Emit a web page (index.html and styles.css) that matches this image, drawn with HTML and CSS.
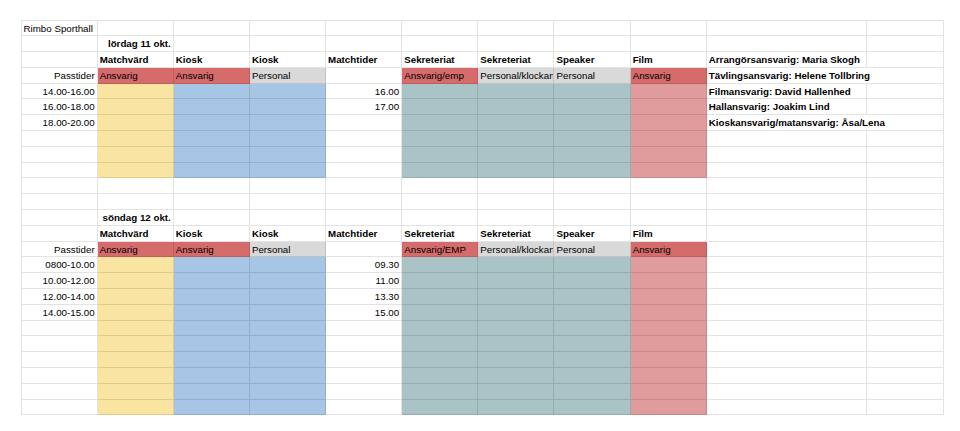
FILE: index.html
```html
<!DOCTYPE html>
<html lang="sv">
<head>
<meta charset="utf-8">
<title>Rimbo Sporthall</title>
<link rel="stylesheet" href="styles.css">
</head>
<body>
<div class="sheet">
  <!-- R1 -->
  <div class="c">Rimbo Sporthall</div><div class="c"></div><div class="c"></div><div class="c"></div><div class="c"></div><div class="c"></div><div class="c"></div><div class="c"></div><div class="c"></div><div class="c"></div><div class="c"></div>
  <!-- R2 -->
  <div class="c"></div><div class="c b r">lördag 11 okt.</div><div class="c"></div><div class="c"></div><div class="c"></div><div class="c"></div><div class="c"></div><div class="c"></div><div class="c"></div><div class="c"></div><div class="c"></div>
  <!-- R3 -->
  <div class="c"></div><div class="c b">Matchvärd</div><div class="c b">Kiosk</div><div class="c b">Kiosk</div><div class="c b">Matchtider</div><div class="c b">Sekreteriat</div><div class="c b">Sekreteriat</div><div class="c b">Speaker</div><div class="c b">Film</div><div class="c b">Arrangörsansvarig: Maria Skogh</div><div class="c"></div>
  <!-- R4 -->
  <div class="c r">Passtider</div><div class="c red">Ansvarig</div><div class="c red">Ansvarig</div><div class="c gray">Personal</div><div class="c"></div><div class="c red">Ansvarig/emp</div><div class="c gray">Personal/klockan</div><div class="c gray">Personal</div><div class="c red">Ansvarig</div><div class="c b span2">Tävlingsansvarig: Helene Tollbring</div>
  <!-- R5 -->
  <div class="c r">14.00-16.00</div><div class="c yel"></div><div class="c blu"></div><div class="c blu"></div><div class="c r">16.00</div><div class="c teal"></div><div class="c teal"></div><div class="c teal"></div><div class="c pink"></div><div class="c b">Filmansvarig: David Hallenhed</div><div class="c"></div>
  <!-- R6 -->
  <div class="c r">16.00-18.00</div><div class="c yel"></div><div class="c blu"></div><div class="c blu"></div><div class="c r">17.00</div><div class="c teal"></div><div class="c teal"></div><div class="c teal"></div><div class="c pink"></div><div class="c b">Hallansvarig: Joakim Lind</div><div class="c"></div>
  <!-- R7 -->
  <div class="c r">18.00-20.00</div><div class="c yel"></div><div class="c blu"></div><div class="c blu"></div><div class="c"></div><div class="c teal"></div><div class="c teal"></div><div class="c teal"></div><div class="c pink"></div><div class="c b span2">Kioskansvarig/matansvarig: Åsa/Lena</div>
  <!-- R8 -->
  <div class="c"></div><div class="c yel"></div><div class="c blu"></div><div class="c blu"></div><div class="c"></div><div class="c teal"></div><div class="c teal"></div><div class="c teal"></div><div class="c pink"></div><div class="c"></div><div class="c"></div>
  <!-- R9 -->
  <div class="c"></div><div class="c yel"></div><div class="c blu"></div><div class="c blu"></div><div class="c"></div><div class="c teal"></div><div class="c teal"></div><div class="c teal"></div><div class="c pink"></div><div class="c"></div><div class="c"></div>
  <!-- R10 -->
  <div class="c"></div><div class="c yel"></div><div class="c blu"></div><div class="c blu"></div><div class="c"></div><div class="c teal"></div><div class="c teal"></div><div class="c teal"></div><div class="c pink"></div><div class="c"></div><div class="c"></div>
  <!-- R11 -->
  <div class="c"></div><div class="c"></div><div class="c"></div><div class="c"></div><div class="c"></div><div class="c"></div><div class="c"></div><div class="c"></div><div class="c"></div><div class="c"></div><div class="c"></div>
  <!-- R12 -->
  <div class="c"></div><div class="c"></div><div class="c"></div><div class="c"></div><div class="c"></div><div class="c"></div><div class="c"></div><div class="c"></div><div class="c"></div><div class="c"></div><div class="c"></div>
  <!-- R13 -->
  <div class="c"></div><div class="c b r">söndag 12 okt.</div><div class="c"></div><div class="c"></div><div class="c"></div><div class="c"></div><div class="c"></div><div class="c"></div><div class="c"></div><div class="c"></div><div class="c"></div>
  <!-- R14 -->
  <div class="c"></div><div class="c b">Matchvärd</div><div class="c b">Kiosk</div><div class="c b">Kiosk</div><div class="c b">Matchtider</div><div class="c b">Sekreteriat</div><div class="c b">Sekreteriat</div><div class="c b">Speaker</div><div class="c b">Film</div><div class="c"></div><div class="c"></div>
  <!-- R15 -->
  <div class="c r">Passtider</div><div class="c red">Ansvarig</div><div class="c red">Ansvarig</div><div class="c gray">Personal</div><div class="c"></div><div class="c red">Ansvarig/EMP</div><div class="c gray">Personal/klockan</div><div class="c gray">Personal</div><div class="c red">Ansvarig</div><div class="c"></div><div class="c"></div>
  <!-- R16 -->
  <div class="c r">0800-10.00</div><div class="c yel"></div><div class="c blu"></div><div class="c blu"></div><div class="c r">09.30</div><div class="c teal"></div><div class="c teal"></div><div class="c teal"></div><div class="c pink"></div><div class="c"></div><div class="c"></div>
  <!-- R17 -->
  <div class="c r">10.00-12.00</div><div class="c yel"></div><div class="c blu"></div><div class="c blu"></div><div class="c r">11.00</div><div class="c teal"></div><div class="c teal"></div><div class="c teal"></div><div class="c pink"></div><div class="c"></div><div class="c"></div>
  <!-- R18 -->
  <div class="c r">12.00-14.00</div><div class="c yel"></div><div class="c blu"></div><div class="c blu"></div><div class="c r">13.30</div><div class="c teal"></div><div class="c teal"></div><div class="c teal"></div><div class="c pink"></div><div class="c"></div><div class="c"></div>
  <!-- R19 -->
  <div class="c r">14.00-15.00</div><div class="c yel"></div><div class="c blu"></div><div class="c blu"></div><div class="c r">15.00</div><div class="c teal"></div><div class="c teal"></div><div class="c teal"></div><div class="c pink"></div><div class="c"></div><div class="c"></div>
  <!-- R20 -->
  <div class="c"></div><div class="c yel"></div><div class="c blu"></div><div class="c blu"></div><div class="c"></div><div class="c teal"></div><div class="c teal"></div><div class="c teal"></div><div class="c pink"></div><div class="c"></div><div class="c"></div>
  <!-- R21 -->
  <div class="c"></div><div class="c yel"></div><div class="c blu"></div><div class="c blu"></div><div class="c"></div><div class="c teal"></div><div class="c teal"></div><div class="c teal"></div><div class="c pink"></div><div class="c"></div><div class="c"></div>
  <!-- R22 -->
  <div class="c"></div><div class="c yel"></div><div class="c blu"></div><div class="c blu"></div><div class="c"></div><div class="c teal"></div><div class="c teal"></div><div class="c teal"></div><div class="c pink"></div><div class="c"></div><div class="c"></div>
  <!-- R23 -->
  <div class="c"></div><div class="c yel"></div><div class="c blu"></div><div class="c blu"></div><div class="c"></div><div class="c teal"></div><div class="c teal"></div><div class="c teal"></div><div class="c pink"></div><div class="c"></div><div class="c"></div>
  <!-- R24 -->
  <div class="c"></div><div class="c yel"></div><div class="c blu"></div><div class="c blu"></div><div class="c"></div><div class="c teal"></div><div class="c teal"></div><div class="c teal"></div><div class="c pink"></div><div class="c"></div><div class="c"></div>
  <!-- R25 -->
  <div class="c"></div><div class="c yel"></div><div class="c blu"></div><div class="c blu"></div><div class="c"></div><div class="c teal"></div><div class="c teal"></div><div class="c teal"></div><div class="c pink"></div><div class="c"></div><div class="c"></div>
</div>
</body>
</html>
```

FILE: styles.css
```css
html, body {
  margin: 0;
  padding: 0;
  background: #ffffff;
}

body {
  font-family: "Liberation Sans", Arial, sans-serif;
  color: #000;
}

.sheet {
  display: grid;
  grid-template-columns: repeat(9, 76.15px) 160.5px 76.5px;
  grid-auto-rows: 15.8px;
  width: max-content;
  margin: 19.5px 0 0 20.5px;
  border-top: 1px solid #e2e2e2;
  border-left: 1px solid #e2e2e2;
}

.c {
  box-sizing: border-box;
  border-right: 1px solid rgba(0, 0, 0, 0.11);
  border-bottom: 1px solid rgba(0, 0, 0, 0.11);
  font-size: 9.75px;
  line-height: 14.8px;
  padding: 1px 2px 0;
  white-space: nowrap;
  overflow: hidden;
}

.r { text-align: right; }
.b { font-weight: bold; }
.span2 { grid-column: span 2; }

.red  { background: #d56b6b; }
.gray { background: #d9d9d9; }
.yel  { background: #f9e5a1; }
.blu  { background: #a7c5e5; }
.teal { background: #a9c3c6; }
.pink { background: #e09c9c; }
```
